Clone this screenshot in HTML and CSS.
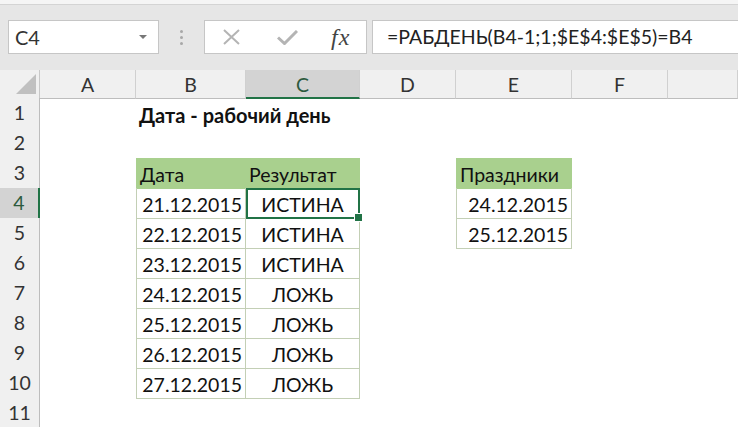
FILE: index.html
```html
<!DOCTYPE html>
<html lang="ru">
<head>
    <meta charset="UTF-8">
    <title>Дата - рабочий день</title>
    <link rel="stylesheet" href="styles.css">
</head>
<body>
    <div class="ribbon-edge"></div>

    <!-- name box + formula bar -->
    <div class="formula-row">
        <div class="name-box">
            <span>C4</span>
            <span class="caret"></span>
        </div>
        <div class="grip"><span></span><span></span><span></span></div>
        <div class="fx-box">
            <svg class="icon-x" width="17" height="16" viewBox="0 0 17 16">
                <path d="M1 1 L16 15 M16 1 L1 15" stroke="#b4b4b4" stroke-width="2" fill="none"/>
            </svg>
            <svg class="icon-ok" width="21" height="15" viewBox="0 0 21 15">
                <path d="M1 7.5 L7.5 13.5 L20 1" stroke="#b4b4b4" stroke-width="3" fill="none"/>
            </svg>
            <span class="fx">fx</span>
        </div>
        <div class="formula">=РАБДЕНЬ(B4-1;1;$E$4:$E$5)=B4</div>
    </div>

    <!-- sheet -->
    <div class="sheet">
        <div class="row col-heads">
            <div class="corner"><span class="tri"></span></div>
            <div class="ch">A</div>
            <div class="ch">B</div>
            <div class="ch sel">C</div>
            <div class="ch">D</div>
            <div class="ch">E</div>
            <div class="ch">F</div>
            <div class="ch"></div>
        </div>

        <div class="row">
            <div class="rh">1</div>
            <div class="cell"></div>
            <div class="cell title">Дата - рабочий день</div>
            <div class="cell"></div><div class="cell"></div><div class="cell"></div><div class="cell"></div><div class="cell"></div>
        </div>
        <div class="row">
            <div class="rh">2</div>
            <div class="cell"></div><div class="cell"></div><div class="cell"></div><div class="cell"></div><div class="cell"></div><div class="cell"></div><div class="cell"></div>
        </div>
        <div class="row">
            <div class="rh">3</div>
            <div class="cell"></div>
            <div class="cell th first">Дата</div>
            <div class="cell th">Результат</div>
            <div class="cell"></div>
            <div class="cell th first">Праздники</div>
            <div class="cell"></div><div class="cell"></div>
        </div>
        <div class="row">
            <div class="rh sel">4</div>
            <div class="cell"></div>
            <div class="cell t first num">21.12.2015</div>
            <div class="cell t mid active">ИСТИНА</div>
            <div class="cell"></div>
            <div class="cell t first num">24.12.2015</div>
            <div class="cell"></div><div class="cell"></div>
        </div>
        <div class="row">
            <div class="rh">5</div>
            <div class="cell"></div>
            <div class="cell t first num">22.12.2015</div>
            <div class="cell t mid">ИСТИНА</div>
            <div class="cell"></div>
            <div class="cell t first num">25.12.2015</div>
            <div class="cell"></div><div class="cell"></div>
        </div>
        <div class="row">
            <div class="rh">6</div>
            <div class="cell"></div>
            <div class="cell t first num">23.12.2015</div>
            <div class="cell t mid">ИСТИНА</div>
            <div class="cell"></div><div class="cell"></div><div class="cell"></div><div class="cell"></div>
        </div>
        <div class="row">
            <div class="rh">7</div>
            <div class="cell"></div>
            <div class="cell t first num">24.12.2015</div>
            <div class="cell t mid">ЛОЖЬ</div>
            <div class="cell"></div><div class="cell"></div><div class="cell"></div><div class="cell"></div>
        </div>
        <div class="row">
            <div class="rh">8</div>
            <div class="cell"></div>
            <div class="cell t first num">25.12.2015</div>
            <div class="cell t mid">ЛОЖЬ</div>
            <div class="cell"></div><div class="cell"></div><div class="cell"></div><div class="cell"></div>
        </div>
        <div class="row">
            <div class="rh">9</div>
            <div class="cell"></div>
            <div class="cell t first num">26.12.2015</div>
            <div class="cell t mid">ЛОЖЬ</div>
            <div class="cell"></div><div class="cell"></div><div class="cell"></div><div class="cell"></div>
        </div>
        <div class="row">
            <div class="rh">10</div>
            <div class="cell"></div>
            <div class="cell t first num">27.12.2015</div>
            <div class="cell t mid">ЛОЖЬ</div>
            <div class="cell"></div><div class="cell"></div><div class="cell"></div><div class="cell"></div>
        </div>
        <div class="row">
            <div class="rh">11</div>
            <div class="cell"></div><div class="cell"></div><div class="cell"></div><div class="cell"></div><div class="cell"></div><div class="cell"></div><div class="cell"></div>
        </div>
    </div>
</body>
</html>
```

FILE: styles.css
```css
* {
    box-sizing: border-box;
}

body {
    margin: 0;
    width: 738px;
    height: 427px;
    overflow: hidden;
    background: #fff;
    font-family: Lato, "Open Sans", sans-serif;
    color: #111;
}

.ribbon-edge {
    height: 5px;
    background: #f5f5f5;
    border-bottom: 1px solid #d4d4d4;
}

/* formula bar */
.formula-row {
    height: 65px;
    background: #e6e6e6;
    display: flex;
    padding-top: 15px;
}

.name-box {
    margin-left: 8px;
    width: 151px;
    height: 34px;
    background: #fff;
    border: 1px solid #c6c6c6;
    display: flex;
    align-items: center;
    justify-content: space-between;
    padding: 0 11px 0 6px;
    font-size: 20px;
    color: #333;
}

.caret {
    width: 0;
    height: 0;
    border-left: 4px solid transparent;
    border-right: 4px solid transparent;
    border-top: 4px solid #777;
}

.grip {
    width: 45px;
    height: 34px;
    display: flex;
    flex-direction: column;
    align-items: center;
    justify-content: center;
    gap: 3px;
}

.grip span {
    width: 3px;
    height: 3px;
    border-radius: 50%;
    background: #a8a8a8;
}

.fx-box {
    width: 163px;
    height: 34px;
    background: #fff;
    border: 1px solid #c6c6c6;
    display: flex;
    align-items: center;
    padding-left: 18px;
}

.icon-ok {
    margin-left: 37px;
}

.fx {
    margin-left: 33px;
    font-family: "Liberation Serif", serif;
    font-style: italic;
    font-size: 24px;
    letter-spacing: 1px;
    color: #444;
}

.formula {
    flex: 1;
    margin-left: 5px;
    height: 34px;
    background: #fff;
    border: 1px solid #c6c6c6;
    border-right: none;
    padding-left: 14px;
    font-size: 19.5px;
    line-height: 32px;
    color: #222;
    white-space: nowrap;
}

/* sheet grid */
.row {
    display: grid;
    grid-template-columns: 40px 96px 110px 114px 96px 116px 96px 1fr;
    height: 30px;
}

.col-heads {
    height: 28px;
    background: #f0f0f0;
}

.corner {
    border-right: 1px solid #c8c8c8;
    border-bottom: 1px solid #bdbdbd;
    display: flex;
    align-items: flex-end;
    justify-content: flex-end;
    padding: 0 3px 4px 0;
}

.tri {
    width: 0;
    height: 0;
    border-left: 20px solid transparent;
    border-bottom: 20px solid #c0c0c0;
}

.ch {
    border-right: 1px solid #d0d0d0;
    border-bottom: 1px solid #bdbdbd;
    text-align: center;
    font-size: 19.5px;
    line-height: 24px;
    padding-top: 3px;
    color: #333;
}

.ch.sel {
    background: #d3d3d3;
    border-bottom: 2px solid #217346;
    color: #2d5a3d;
}

.rh {
    background: #f0f0f0;
    border-right: 1px solid #bdbdbd;
    border-bottom: 1px solid #d8d8d8;
    text-align: center;
    font-size: 19.5px;
    line-height: 30px;
    color: #333;
}

.rh.sel {
    background: #d3d3d3;
    border-right: 2px solid #217346;
    color: #2d5a3d;
}

.cell {
    font-size: 19.5px;
    line-height: 26px;
    padding: 4px 3px 0;
    white-space: nowrap;
}

.title {
    font-weight: bold;
    font-size: 20px;
    overflow: visible;
}

.t {
    border-right: 1px solid #c3cfb5;
    border-bottom: 1px solid #c3cfb5;
}

.first {
    border-left: 1px solid #c3cfb5;
}

.th {
    background: #a9d08e;
    border-color: #a9d08e;
}

.num {
    text-align: right;
}

.mid {
    text-align: center;
}

.active {
    position: relative;
    outline: 2px solid #217346;
    outline-offset: -2px;
}

.active::after {
    content: "";
    position: absolute;
    right: -4px;
    bottom: -4px;
    width: 7px;
    height: 7px;
    background: #217346;
    border: 1px solid #fff;
}
```
